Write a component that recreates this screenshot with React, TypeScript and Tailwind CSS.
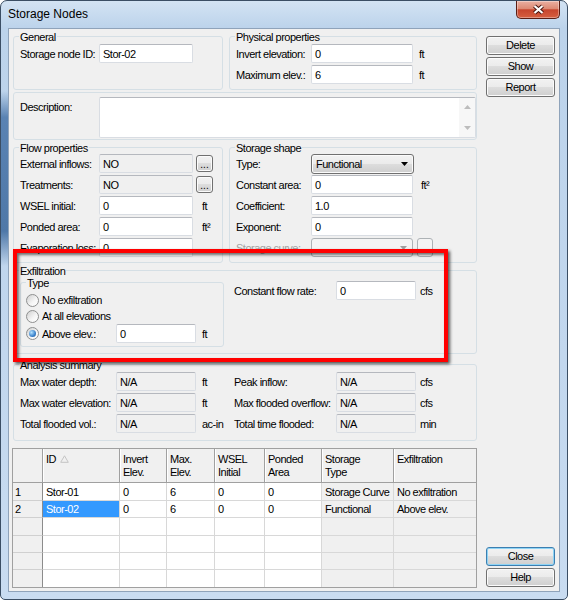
import React from "react"
import { clsx as cx } from "clsx"

const gridCols = [
  { w: "w-[77px]", head: "ID", sort: true },
  { w: "w-[47px]", head: "Invert\nElev." },
  { w: "w-[48px]", head: "Max.\nElev." },
  { w: "w-[50px]", head: "WSEL\nInitial" },
  { w: "w-[57px]", head: "Ponded\nArea" },
  { w: "w-[72px]", head: "Storage\nType", locked: true },
  { w: "w-[82px]", head: "Exfiltration", locked: true },
]

const gridRows = [
  { num: "1", h: "h-[18px]", cells: ["Stor-01", "0", "6", "0", "0", "Storage Curve", "No exfiltration"] },
  { num: "2", h: "h-[17px]", cells: ["Stor-02", "0", "6", "0", "0", "Functional", "Above elev."], selected: true },
  { num: "", h: "h-[18px]", cells: [] as string[] },
  { num: "", h: "h-[17px]", cells: [] as string[] },
  { num: "", h: "h-[17px]", cells: [] as string[] },
  { num: "", h: "h-[17px]", cells: [] as string[] },
]

// win7 style text box
function Edit({ value = "", ro = false, className = "" }: { value?: string; ro?: boolean; className?: string }) {
  return (
    <div
      className={cx(
        "flex h-[19px] shrink-0 items-center rounded-[2px] border border-[#d9dde3] border-t-[#b5b8be] pl-[3px] whitespace-nowrap",
        ro ? "bg-[#f0f0f0]" : "bg-white",
        className,
      )}
    >
      {value}
    </div>
  )
}

function Btn({ children, def = false, className = "" }: { children: React.ReactNode; def?: boolean; className?: string }) {
  return (
    <button
      className={cx(
        "flex h-[19px] w-[69px] items-center justify-center rounded-[3px] border bg-[linear-gradient(#f2f2f2_0%,#ebebeb_49%,#dddddd_50%,#cfcfcf_100%)] leading-none text-black",
        def
          ? "border-[#3c7fb1] shadow-[inset_0_0_0_1px_#8fd4f5]"
          : "border-[#707070] shadow-[inset_0_0_0_1px_#fbfbfb]",
        className,
      )}
    >
      {children}
    </button>
  )
}

function DotsBtn() {
  return (
    <div className="ml-[3px] flex h-[17px] w-[17px] items-end justify-center rounded-[3px] border border-[#707070] bg-[linear-gradient(#f2f2f2_0%,#ebebeb_49%,#dddddd_50%,#cfcfcf_100%)] pb-[2px] text-[10px] leading-[8px] tracking-normal shadow-[inset_0_0_0_1px_#fbfbfb]">
      ...
    </div>
  )
}

function Group({ title, className = "", children }: { title?: string; className?: string; children: React.ReactNode }) {
  return (
    <fieldset className={cx("min-w-0 rounded-[3px] border border-[#d5dfe5]", className)}>
      {title && <legend className="ml-[5px] px-[1px] pt-[2px] leading-[12px]">{title}</legend>}
      {children}
    </fieldset>
  )
}

function Row({ label, lw, disabled = false, children }: { label: string; lw: string; disabled?: boolean; children?: React.ReactNode }) {
  return (
    <div className="flex h-[19px] items-center">
      <span className={cx("shrink-0 whitespace-nowrap", lw, disabled && "text-[#a3a3a3]")}>{label}</span>
      {children}
    </div>
  )
}

function Radio({ checked = false }: { checked?: boolean }) {
  return (
    <span className="flex size-[13px] shrink-0 items-center justify-center rounded-full border border-[#8e8f8f] bg-[linear-gradient(135deg,#cfcfcf,#f6f6f6_60%,#ffffff)]">
      {checked && (
        <span className="size-[7px] rounded-full bg-[radial-gradient(circle_at_35%_35%,#b4e2ff,#3a82cc_60%,#1c4f8c)]" />
      )}
    </span>
  )
}

function Arrow({ up = false, color = "#000" }: { up?: boolean; color?: string }) {
  return (
    <svg width="7" height="4" viewBox="0 0 7 4">
      <path d={up ? "M0 4h7L3.5 0z" : "M0 0h7L3.5 4z"} fill={color} />
    </svg>
  )
}

export default function App() {
  return (
    <div className="relative flex h-[600px] w-[568px] flex-col overflow-hidden rounded-t-[7px] rounded-b-[5px] border border-[#3b4e64] bg-[linear-gradient(180deg,#d3e3f3_0px,#bcd3eb_27px,#c2d7ee_60%,#c9dcf1_100%)] px-[7px] pb-[7px] font-['Liberation_Sans',Arial,sans-serif] text-[11px] leading-[14px] tracking-[-0.5px] text-black">
      {/* aero glass streak on the left frame */}
      <div className="pointer-events-none absolute top-[90px] left-0 h-[175px] w-[7px] bg-[linear-gradient(180deg,rgba(70,110,160,0)_0%,#5a83b3_15%,#4f78a8_80%,rgba(70,110,160,0)_100%)]" />

      {/* title bar */}
      <div className="flex h-[27px] shrink-0 items-start justify-between">
        <span className="mt-[6px] text-[12px] leading-[14px] tracking-normal">Storage Nodes</span>
        <div className="flex h-[18px] w-[44px] items-center justify-center rounded-b-[5px] border border-t-0 border-[#5b1e14] bg-[linear-gradient(#eab0a2_0%,#dd8a74_45%,#c7452d_52%,#d65f40_100%)] shadow-[inset_0_0_0_1px_rgba(255,255,255,0.35)]">
          <svg width="13" height="11" viewBox="0 0 13 11">
            <path d="M2.5 2 L10.5 9 M10.5 2 L2.5 9" stroke="#4a1710" strokeWidth="4.2" />
            <path d="M2.5 2 L10.5 9 M10.5 2 L2.5 9" stroke="#fff" strokeWidth="2.2" />
          </svg>
        </div>
      </div>

      {/* client area */}
      <div className="relative flex flex-1 border border-[#8fa3ba] bg-[#f0f0f0] pl-[4px]">
        <div className="flex w-[464px] flex-col">
          {/* general + physical */}
          <div className="flex gap-[6px]">
            <Group title="General" className="w-[210px]">
              <div className="px-[6px] pt-[1px]">
                <Row label="Storage node ID:" lw="w-[79px]">
                  <Edit value="Stor-02" className="w-[94px]" />
                </Row>
              </div>
            </Group>
            <Group title="Physical properties" className="w-[248px]">
              <div className="flex flex-col gap-[2px] px-[6px] pt-[1px] pb-[5px]">
                <Row label="Invert elevation:" lw="w-[75px]">
                  <Edit value="0" className="w-[102px]" />
                  <span className="ml-[6px]">ft</span>
                </Row>
                <Row label="Maximum elev.:" lw="w-[75px]">
                  <Edit value="6" className="w-[102px]" />
                  <span className="ml-[6px]">ft</span>
                </Row>
              </div>
            </Group>
          </div>

          {/* description */}
          <div className="mt-[2px] flex h-[48px] rounded-[3px] border border-[#d5dfe5] pt-[4px] pl-[6px]">
            <span className="w-[79px] shrink-0 pt-[3px]">Description:</span>
            <div className="flex h-[41px] flex-1 justify-end rounded-[2px] border border-[#d9dde3] border-t-[#b5b8be] bg-white">
              <div className="flex w-[16px] flex-col items-center justify-between bg-[#f7f7f7] py-[7px]">
                <Arrow up color="#bdbdbd" />
                <Arrow color="#bdbdbd" />
              </div>
            </div>
          </div>

          {/* flow properties + storage shape */}
          <div className="flex gap-[6px]">
            <Group title="Flow properties" className="w-[210px]">
              <div className="flex flex-col gap-[2px] px-[6px] pb-[5px]">
                <Row label="External inflows:" lw="w-[79px]">
                  <Edit value="NO" ro className="w-[94px]" />
                  <DotsBtn />
                </Row>
                <Row label="Treatments:" lw="w-[79px]">
                  <Edit value="NO" ro className="w-[94px]" />
                  <DotsBtn />
                </Row>
                <Row label="WSEL initial:" lw="w-[79px]">
                  <Edit value="0" className="w-[94px]" />
                  <span className="ml-[9px]">ft</span>
                </Row>
                <Row label="Ponded area:" lw="w-[79px]">
                  <Edit value="0" className="w-[94px]" />
                  <span className="ml-[9px]">ft²</span>
                </Row>
                <Row label="Evaporation loss:" lw="w-[79px]">
                  <Edit value="0" className="w-[94px]" />
                </Row>
              </div>
            </Group>
            <Group title="Storage shape" className="w-[248px]">
              <div className="flex flex-col gap-[2px] px-[6px] pb-[5px]">
                <Row label="Type:" lw="w-[75px]">
                  <div className="flex h-[20px] w-[103px] items-center justify-between rounded-[3px] border border-[#707070] bg-[linear-gradient(#f2f2f2_0%,#ebebeb_49%,#dddddd_50%,#cfcfcf_100%)] pr-[5px] pl-[4px] shadow-[inset_0_0_0_1px_#fbfbfb]">
                    Functional
                    <Arrow />
                  </div>
                </Row>
                <Row label="Constant area:" lw="w-[75px]">
                  <Edit value="0" className="w-[102px]" />
                  <span className="ml-[8px]">ft²</span>
                </Row>
                <Row label="Coefficient:" lw="w-[75px]">
                  <Edit value="1.0" className="w-[102px]" />
                </Row>
                <Row label="Exponent:" lw="w-[75px]">
                  <Edit value="0" className="w-[102px]" />
                </Row>
                <Row label="Storage curve:" lw="w-[75px]" disabled>
                  <div className="flex h-[19px] w-[102px] items-center justify-end rounded-[3px] border border-[#adb2b5] bg-[#f4f4f4] pr-[5px]">
                    <Arrow color="#a0a0a0" />
                  </div>
                  <div className="ml-[4px] h-[19px] w-[16px] rounded-[3px] border border-[#adb2b5] bg-[#f4f4f4]" />
                </Row>
              </div>
            </Group>
          </div>

          {/* exfiltration */}
          <Group title="Exfiltration">
            <div className="flex pb-[6px] pl-[6px]">
              <Group title="Type" className="-mt-[2px] w-[204px]">
                <div className="flex flex-col pt-[3px] pb-[3px] pl-[5px]">
                  <div className="flex h-[16px] items-center gap-[3px]">
                    <Radio />
                    No exfiltration
                  </div>
                  <div className="flex h-[16px] items-center gap-[3px]">
                    <Radio />
                    At all elevations
                  </div>
                  <div className="flex h-[19px] items-center">
                    <span className="flex w-[90px] items-center gap-[3px]">
                      <Radio checked />
                      Above elev.:
                    </span>
                    <Edit value="0" className="w-[80px]" />
                    <span className="ml-[6px]">ft</span>
                  </div>
                </div>
              </Group>
              <div className="mt-[4px] ml-[10px] flex h-[19px] items-center">
                <span className="w-[102px]">Constant flow rate:</span>
                <Edit value="0" className="w-[80px]" />
                <span className="ml-[4px]">cfs</span>
              </div>
            </div>
          </Group>

          {/* analysis summary */}
          <Group title="Analysis summary" className="mt-[3px]">
            <div className="flex flex-col gap-[2px] pt-[1px] pb-[7px] pl-[6px]">
              {[
                ["Max water depth:", "ft", "Peak inflow:", "cfs"],
                ["Max water elevation:", "ft", "Max flooded overflow:", "cfs"],
                ["Total flooded vol.:", "ac-in", "Total time flooded:", "min"],
              ].map(([l1, u1, l2, u2]) => (
                <div key={l1} className="flex h-[19px] items-center whitespace-nowrap">
                  <span className="w-[96px]">{l1}</span>
                  <Edit value="N/A" ro className="w-[80px]" />
                  <span className="w-[38px] pl-[6px]">{u1}</span>
                  <span className="w-[102px]">{l2}</span>
                  <Edit value="N/A" ro className="w-[80px]" />
                  <span className="ml-[4px]">{u2}</span>
                </div>
              ))}
            </div>
          </Group>

          {/* nodes grid */}
          <div className="mt-[7px] -ml-px w-[465px] border border-[#a0a0a0] bg-white">
            <div className="flex h-[34px] border-b border-[#a0a0a0] bg-[#f0f0f0]">
              <div className="w-[30px] border-r border-[#a0a0a0]" />
              {gridCols.map((c, i) => (
                <div
                  key={c.head}
                  className={cx(
                    "flex items-start gap-[4px] pt-[4px] pl-[3px] leading-[13px] whitespace-pre-line shadow-[inset_1px_0_0_#fff]",
                    c.w,
                    i < gridCols.length - 1 && "border-r border-[#a0a0a0]",
                  )}
                >
                  {c.head}
                  {c.sort && (
                    <svg width="9" height="8" viewBox="0 0 9 8" className="mt-[2px]">
                      <path d="M4.5 0.8 L8.3 7.3 H0.7 Z" fill="none" stroke="#c4c4c4" strokeWidth="1" />
                    </svg>
                  )}
                </div>
              ))}
            </div>
            {gridRows.map((row, r) => {
              const last = r === gridRows.length - 1
              return (
                <div key={r} className={cx("flex", row.h)}>
                  <div
                    className={cx(
                      "flex w-[30px] items-center border-r border-[#8c8c8c] bg-[#f0f0f0] pl-[2px]",
                      !last && "border-b border-b-[#d0d0d0]",
                    )}
                  >
                    {row.num}
                  </div>
                  {gridCols.map((c, i) => (
                    <div
                      key={c.head}
                      className={cx(
                        "flex items-center overflow-hidden pl-[3px] whitespace-nowrap",
                        c.w,
                        i < gridCols.length - 1 && "border-r border-[#d8d8d8]",
                        !last && "border-b border-[#d8d8d8]",
                        row.selected && i === 0 ? "bg-[#3399ff] text-white" : c.locked ? "bg-[#f0f0f0]" : "bg-white",
                      )}
                    >
                      {row.cells[i] ?? ""}
                    </div>
                  ))}
                </div>
              )
            })}
          </div>
        </div>

        {/* command buttons */}
        <div className="ml-[9px] flex w-[69px] flex-col gap-[2px] pt-[7px] pb-[4px]">
          <Btn>Delete</Btn>
          <Btn>Show</Btn>
          <Btn>Report</Btn>
          <Btn def className="mt-auto">
            Close
          </Btn>
          <Btn>Help</Btn>
        </div>
      </div>

      {/* red annotation frame */}
      <div className="pointer-events-none absolute top-[248px] left-[12px] h-[113px] w-[435px] border-[4px] border-[#ff0000] shadow-[2px_2px_3px_rgba(0,0,0,0.65),inset_2px_2px_3px_rgba(0,0,0,0.55)]" />
    </div>
  )
}
